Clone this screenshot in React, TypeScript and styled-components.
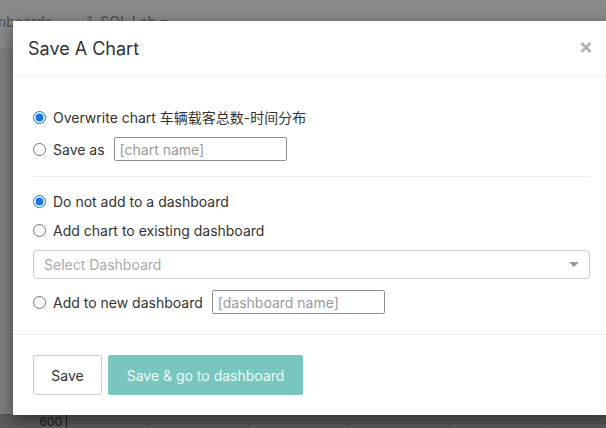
import React from "react";
import styled, { createGlobalStyle } from "styled-components";

const GlobalStyle = createGlobalStyle`
  html, body { margin: 0; padding: 0; }
  body {
    background: #8a8a8a;
    font-family: Inter, "Noto Sans CJK SC", sans-serif;
    overflow: hidden;
  }
  * { box-sizing: border-box; }
`;

const Page = styled.div`
  position: relative;
  width: 606px;
  height: 428px;
  display: flex;
  flex-direction: column;
  overflow: hidden;
`;

const NavBar = styled.div`
  height: 49px;
  background: #8a8a8a;
  display: flex;
  align-items: flex-start;
  padding-top: 13px;
  border-bottom: 1px solid #858585;
  font-size: 14px;
  color: #4d4d4d;
`;

const NavItem = styled.span<{ $ml?: number }>`
  margin-left: ${(p) => p.$ml ?? 0}px;
  display: inline-flex;
  align-items: center;
  gap: 6px;
  white-space: nowrap;
`;

const Main = styled.div`
  flex: 1;
  background: #7f7f7f;
  display: flex;
  flex-direction: column;
  justify-content: flex-end;
`;

const ChartStrip = styled.div`
  height: 14px;
  display: grid;
  grid-template-columns: 67px 81px repeat(5, 100.5px);
  background: #5c5c5c;
  border-top: 1px solid #555;
`;

const AxisLabel = styled.div`
  font-size: 12px;
  color: #1e1e1e;
  text-align: right;
  padding-right: 4px;
  line-height: 14px;
  border-right: 1px solid #1e1e1e;
`;

const GridCell = styled.div`
  border-right: 1px solid #4f4f4f;
  border-top: 1px solid #4f4f4f;
  margin-top: 8px;
`;

const Modal = styled.div`
  position: absolute;
  left: 13px;
  top: 21px;
  width: 600px;
  background: #fff;
  box-shadow: 0 5px 15px rgba(0, 0, 0, 0.5);
  display: flex;
  flex-direction: column;
  color: #333;
`;

const Header = styled.div`
  height: 56px;
  padding: 0 20px 0 15px;
  display: flex;
  align-items: center;
  justify-content: space-between;
  border-bottom: 1px solid #eee;
`;

const Title = styled.h4`
  margin: 0;
  font-size: 18px;
  font-weight: 400;
  color: #333;
`;

const Close = styled.span`
  font-size: 21px;
  font-weight: 700;
  color: #b3b3b3;
  line-height: 1;
  margin-top: -4px;
`;

const Body = styled.div`
  padding: 30px 23px 20px 20px;
  display: flex;
  flex-direction: column;
`;

const Row = styled.label<{ $mt?: number; $h?: number }>`
  margin-top: ${(p) => p.$mt ?? 0}px;
  height: ${(p) => p.$h ?? 20}px;
  display: flex;
  align-items: center;
  font-size: 14px;
  color: #333;
  white-space: nowrap;
`;

const Radio = styled.input.attrs({ type: "radio" })`
  margin: 0 7px 0 0;
  width: 13px;
  height: 13px;
  accent-color: #1a73e8;
`;

const TextInput = styled.input<{ $w: number; $ml: number }>`
  width: ${(p) => p.$w}px;
  height: 24px;
  margin-left: ${(p) => p.$ml}px;
  border: 1px solid #8f8f8f;
  border-radius: 2px;
  padding: 0 5px;
  font-family: Inter, sans-serif;
  font-size: 14px;
  color: #333;
  &::placeholder { color: #9a9a9a; }
`;

const Divider = styled.hr`
  margin: 15px 0 0 0;
  border: 0;
  border-top: 1px solid #eee;
`;

const Select = styled.div`
  margin-top: 10px;
  height: 29px;
  border: 1px solid #ccc;
  border-radius: 4px;
  display: flex;
  align-items: center;
  justify-content: space-between;
  padding: 0 10px 0 10px;
  font-size: 14px;
  color: #aaa;
`;

const Caret = styled.span`
  width: 0;
  height: 0;
  border-left: 5px solid transparent;
  border-right: 5px solid transparent;
  border-top: 5px solid #999;
`;

const Footer = styled.div`
  border-top: 1px solid #eee;
  padding: 20px;
  display: flex;
  gap: 6px;
`;

const Button = styled.button<{ $primary?: boolean; $w: number }>`
  width: ${(p) => p.$w}px;
  height: 40px;
  border-radius: 2px;
  font-family: Inter, sans-serif;
  font-size: 14px;
  border: 1px solid ${(p) => (p.$primary ? "#77c7be" : "#ccc")};
  background: ${(p) => (p.$primary ? "#77c7be" : "#fff")};
  color: ${(p) => (p.$primary ? "#eef8f7" : "#333")};
  padding: 0;
`;

const SearchIcon = () => (
  <svg width="8" height="12" viewBox="0 0 8 12">
    <path d="M1 1h6M4 1v8M2 9h4" stroke="#4d4d4d" strokeWidth="1.2" fill="none" />
  </svg>
);

export default function App() {
  return (
    <>
      <GlobalStyle />
      <Page>
        <NavBar>
          <NavItem $ml={-2}>nboards</NavItem>
          <NavItem $ml={34}>
            <SearchIcon />
            SQL Lab ▾
          </NavItem>
        </NavBar>
        <Main>
          <ChartStrip>
            <AxisLabel>600</AxisLabel>
            <GridCell />
            <GridCell />
            <GridCell />
            <GridCell />
            <GridCell />
            <GridCell />
          </ChartStrip>
        </Main>
        <Modal>
          <Header>
            <Title>Save A Chart</Title>
            <Close>×</Close>
          </Header>
          <Body>
            <Row>
              <Radio name="action" defaultChecked />
              Overwrite chart 车辆载客总数-时间分布
            </Row>
            <Row $mt={10} $h={24}>
              <Radio name="action" />
              Save as
              <TextInput $w={173} $ml={9} placeholder="[chart name]" />
            </Row>
            <Divider />
            <Row $mt={14}>
              <Radio name="dash" defaultChecked />
              Do not add to a dashboard
            </Row>
            <Row $mt={9}>
              <Radio name="dash" />
              Add chart to existing dashboard
            </Row>
            <Select>
              Select Dashboard
              <Caret />
            </Select>
            <Row $mt={11} $h={24}>
              <Radio name="dash" />
              Add to new dashboard
              <TextInput $w={173} $ml={9} placeholder="[dashboard name]" />
            </Row>
          </Body>
          <Footer>
            <Button $w={69}>Save</Button>
            <Button $w={195} $primary>
              Save &amp; go to dashboard
            </Button>
          </Footer>
        </Modal>
      </Page>
    </>
  );
}
